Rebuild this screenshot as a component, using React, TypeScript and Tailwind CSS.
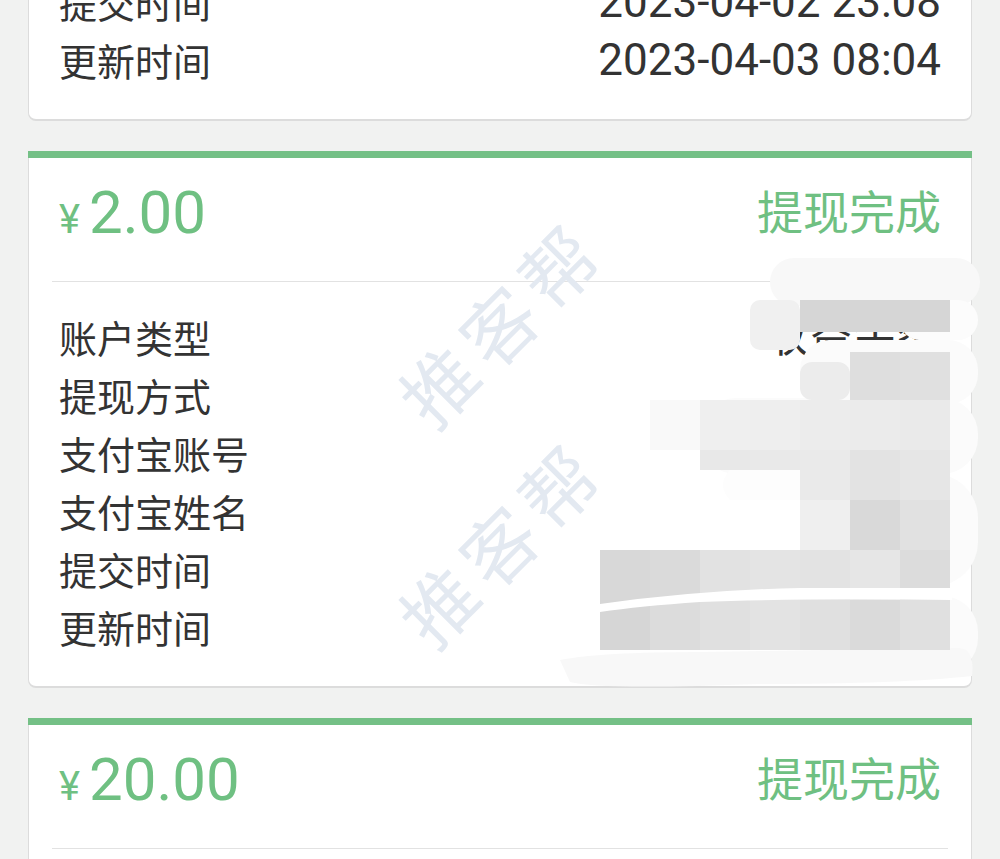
type Row = { label: string; value?: string };

const cjk = "font-['Noto_Sans_CJK_SC',sans-serif]";
const num = "font-['Roboto','Noto_Sans_CJK_SC',sans-serif]";

function Card({ amount, rows }: { amount: string; rows: Row[] }) {
  return (
    <div className="rounded-b-[8px] border-x border-b-2 border-[#dcdcdc] bg-white">
      <div className="-mx-px h-[7px] bg-[#74c086]" />
      {/* amount + status */}
      <div className="flex h-[123px] items-center justify-between px-[30px] pb-[14px]">
        <div className={`flex items-baseline text-[#6fc082] ${num}`}>
          <span className="text-[40px] leading-none">¥</span>
          <span className="ml-[9px] text-[60px] leading-none">{amount}</span>
        </div>
        <span className={`mb-[8px] text-[46px] leading-none text-[#6fc082] ${cjk}`}>提现完成</span>
      </div>
      <div className="mx-[23px] h-px bg-[#e2e2e2]" />
      <div className="pt-[26px] pb-[30px]">
        {rows.map((r) => (
          <div key={r.label} className="flex h-[58px] items-center justify-between px-[30px] text-[#333]">
            <span className={`text-[38px] leading-none ${cjk}`}>{r.label}</span>
            {r.value && <span className={`text-[44px] leading-none ${num}`}>{r.value}</span>}
          </div>
        ))}
      </div>
    </div>
  );
}

// mosaic cells over the hidden values of the second card
const cells: [number, number, number, number, string][] = [
  [800, 300, 150, 32, '#d6d6d6'],
  [850, 352, 50, 48, '#dedede'],
  [900, 352, 50, 48, '#e0e0e0'],
  [650, 400, 50, 50, '#f9f9f9'],
  [700, 400, 50, 50, '#efefef'],
  [750, 400, 50, 50, '#eeeeee'],
  [800, 400, 50, 50, '#ececec'],
  [850, 400, 50, 50, '#ebebeb'],
  [900, 400, 50, 50, '#eaeaea'],
  [700, 450, 50, 20, '#e8e8e8'],
  [750, 450, 50, 50, '#e9e9e9'],
  [800, 450, 50, 50, '#eaeaea'],
  [850, 450, 50, 50, '#e3e3e3'],
  [900, 450, 50, 50, '#e6e6e6'],
  [800, 500, 50, 50, '#efefef'],
  [850, 500, 50, 50, '#d9d9d9'],
  [900, 500, 50, 50, '#e1e1e1'],
  [600, 550, 50, 56, '#d8d8d8'],
  [650, 550, 50, 56, '#dadada'],
  [700, 550, 50, 56, '#e2e2e2'],
  [750, 550, 50, 56, '#e4e4e4'],
  [800, 550, 50, 56, '#e3e3e3'],
  [850, 550, 50, 56, '#e6e6e6'],
  [900, 550, 50, 56, '#dcdcdc'],
  [600, 600, 50, 50, '#d6d6d6'],
  [650, 600, 50, 50, '#dcdcdc'],
  [700, 600, 50, 50, '#e0e0e0'],
  [750, 600, 50, 50, '#e3e3e3'],
  [800, 600, 50, 50, '#e0e0e0'],
  [850, 600, 50, 50, '#dadada'],
  [900, 600, 50, 50, '#e0e0e0'],
];

function Redaction() {
  return (
    <svg className="pointer-events-none absolute left-0 top-0" width={1000} height={859}>
      {/* soft smudges over the card edge */}
      <rect x={770} y={258} width={210} height={48} rx={24} fill="#f8f8f8" />
      <rect x={900} y={300} width={78} height={40} rx={20} fill="#fcfcfc" />
      <rect x={800} y={340} width={178} height={64} rx={30} fill="#fbfbfb" />
      <rect x={700} y={398} width={278} height={76} rx={36} fill="#fbfbfb" />
      <rect x={860} y={474} width={118} height={112} rx={44} fill="#fbfbfb" />
      <rect x={860} y={596} width={118} height={78} rx={36} fill="#fbfbfb" />
      <path d="M560 660 Q600 652 700 652 L960 648 Q975 650 972 676 Q900 684 760 684 Q600 690 570 682 Z" fill="#f8f8f8" />
      <rect x={750} y={300} width={50} height={50} rx={10} fill="#f0f0f0" />
      {cells.map(([x, y, w, h, c], i) => (
        <rect key={i} x={x} y={y} width={w} height={h} fill={c} />
      ))}
      <rect x={800} y={362} width={50} height={38} rx={12} fill="#ececec" />
      {/* white strokes cutting through */}
      <path d="M600 604 Q700 590 800 588 L952 588 L952 600 Q800 598 700 602 Q640 606 600 612 Z" fill="#ffffff" />
      <path d="M730 470 L800 470 L800 500 L730 500 Q716 485 730 470 Z" fill="#fdfdfd" />
    </svg>
  );
}

function Watermark({ top }: { top: number }) {
  return (
    <div
      className={`pointer-events-none absolute left-[500px] -translate-x-1/2 -translate-y-1/2 -rotate-45 whitespace-nowrap text-[74px] leading-none tracking-[10px] text-[#e3e9f1] ${cjk}`}
      style={{ top }}
    >
      推客帮
    </div>
  );
}

export default function App() {
  return (
    <div className="relative h-[859px] w-[1000px] overflow-hidden bg-[#f1f2f1]">
      {/* list scrolled so the first record is mostly above the fold */}
      <div className="-mt-[416px] flex flex-col gap-[30px] px-[28px]">
        <Card
          amount="5.00"
          rows={[
            { label: '账户类型', value: '收益余额' },
            { label: '提现方式', value: '支付宝' },
            { label: '支付宝账号', value: '138****0000' },
            { label: '支付宝姓名', value: '**' },
            { label: '提交时间', value: '2023-04-02 23:08' },
            { label: '更新时间', value: '2023-04-03 08:04' },
          ]}
        />
        <Card
          amount="2.00"
          rows={[
            { label: '账户类型', value: '收益余额' },
            { label: '提现方式' },
            { label: '支付宝账号' },
            { label: '支付宝姓名' },
            { label: '提交时间' },
            { label: '更新时间' },
          ]}
        />
        <Card
          amount="20.00"
          rows={[
            { label: '账户类型', value: '收益余额' },
            { label: '提现方式', value: '支付宝' },
            { label: '支付宝账号', value: '138****0000' },
            { label: '支付宝姓名', value: '**' },
            { label: '提交时间', value: '2023-04-01 12:30' },
            { label: '更新时间', value: '2023-04-01 18:12' },
          ]}
        />
      </div>
      <Watermark top={321} />
      <Watermark top={541} />
      <Redaction />
    </div>
  );
}
